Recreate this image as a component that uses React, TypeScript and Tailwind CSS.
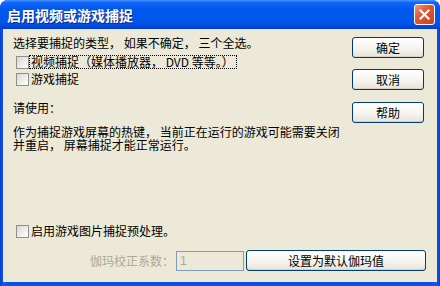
import React from "react";

function Box() {
  return (
    <span className="w-[13px] h-[13px] shrink-0 border border-[#8E8F8F] bg-[linear-gradient(135deg,#D8D8D2_0%,#F4F4F0_70%,#FFFFFF_100%)]" />
  );
}

function XPButton({ children, className = "" }: { children: React.ReactNode; className?: string }) {
  return (
    <div
      className={
        "h-[21px] flex items-center justify-center border border-[#003C74] rounded-[3px] bg-[linear-gradient(to_bottom,#FFFFFF_0%,#F5F4EF_55%,#E6E3D9_100%)] shadow-[inset_0_-1px_0_#D6D0C5] " +
        className
      }
    >
      {children}
    </div>
  );
}

export default function App() {
  return (
    <div className="w-[440px] h-[286px] flex flex-col bg-[linear-gradient(to_right,#0A3FD0_0%,#1A5BEA_1%,#0A4FDD_2%,#0A4FDD_98%,#1A5BEA_99%,#0A3FD0_100%)] rounded-t-[8px] overflow-hidden font-['Noto_Sans_CJK_SC',sans-serif] text-[12px] leading-[12px] text-black">
      <div className="h-[29px] shrink-0 flex items-center pl-[7px] pr-[5px] bg-[linear-gradient(to_bottom,#4A95FF_0%,#1467F7_8%,#0058EE_30%,#0056EA_75%,#0049DC_92%,#003CC8_100%)]">
        <span className="flex-1 text-white font-bold text-[14px] leading-[14px] [text-shadow:1px_1px_0_#0F2A80]">
          启用视频或游戏捕捉
        </span>
        <div className="w-[21px] h-[21px] rounded-[3px] border border-white bg-[linear-gradient(135deg,#EE9A80_0%,#DF5A35_40%,#C9421C_100%)] flex items-center justify-center">
          <svg width="13" height="13" viewBox="0 0 13 13">
            <path d="M2.5 2.5 L10.5 10.5 M10.5 2.5 L2.5 10.5" stroke="#FFFFFF" strokeWidth="2.2" strokeLinecap="square" />
          </svg>
        </div>
      </div>

      <div className="flex-1 mx-[3px] mb-[4px] bg-[#ECE9D8] flex flex-col pt-[8px] pl-[10px] pr-[11px]">
        <div className="flex">
          <div className="flex-1 flex flex-col">
            <div className="h-[12px]">选择要捕捉的类型， 如果不确定， 三个全选。</div>
            <div className="mt-[6px] h-[14px] flex items-center pl-[3px]">
              <Box />
              <span className="h-[14px] flex items-center border border-dotted border-black pl-[1px] pr-[2px]">
                视频捕捉（媒体播放器， DVD 等等。）
              </span>
            </div>
            <div className="mt-[3px] h-[14px] flex items-center pl-[3px]">
              <Box />
              <span className="pl-[2px]">游戏捕捉</span>
            </div>
            <div className="mt-[16px] h-[12px]">请使用：</div>
            <div className="mt-[11px] leading-[13px]">
              作为捕捉游戏屏幕的热键， 当前正在运行的游戏可能需要关闭
              <br />
              并重启， 屏幕捕捉才能正常运行。
            </div>
          </div>
          <div className="w-[72px] mr-[2px] flex flex-col">
            <XPButton>确定</XPButton>
            <XPButton className="mt-[11px]">取消</XPButton>
            <XPButton className="mt-[12px]">帮助</XPButton>
          </div>
        </div>

        <div className="mt-[73px] h-[14px] flex items-center pl-[3px]">
          <Box />
          <span className="pl-[2px]">启用游戏图片捕捉预处理。</span>
        </div>

        <div className="mt-[12px] flex items-center justify-end">
          <span className="text-[#ACA899]">伽玛校正系数：</span>
          <div className="ml-[2px] w-[68px] h-[20px] border border-[#7F9DB9] bg-[#ECE9D8] flex items-center pl-[3px] text-[#ACA899] font-['Liberation_Sans',sans-serif]">
            1
          </div>
          <XPButton className="ml-[2px] w-[180px] h-[20px]">设置为默认伽玛值</XPButton>
        </div>
      </div>
    </div>
  );
}
